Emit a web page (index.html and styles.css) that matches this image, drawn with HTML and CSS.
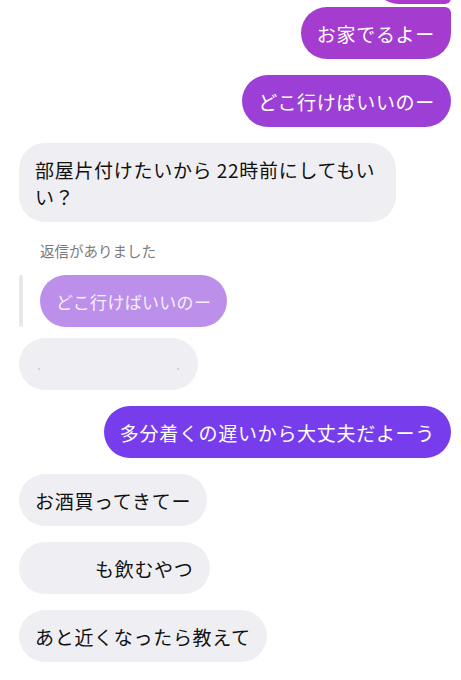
FILE: index.html
```html
<!DOCTYPE html>
<html lang="ja">
<head>
  <meta charset="UTF-8" />
  <meta name="viewport" content="width=device-width, initial-scale=1.0"/>
  <title>chat</title>
  <link rel="stylesheet" href="styles.css">
</head>
<body>

  <div class="chat">
    <!-- previous message, scrolled off -->
    <div class="row me stacked">
      <div class="bubble sent sent-top"></div>
    </div>

    <div class="row me">
      <div class="bubble sent sent-a grouped">お家でるよー</div>
    </div>

    <div class="row me">
      <div class="bubble sent sent-b">どこ行けばいいのー</div>
    </div>

    <div class="row">
      <div class="bubble recv wide">部屋片付けたいから&#8201;22時前にしてもい い？</div>
    </div>

    <!-- reply block -->
    <div class="reply">
      <div class="reply-label">返信がありました</div>
      <div class="reply-body">
        <div class="reply-bar"></div>
        <div class="bubble quoted">どこ行けばいいのー</div>
      </div>
    </div>

    <div class="row tight">
      <div class="bubble recv blank">
        <span class="dot"></span>
        <span class="dot"></span>
      </div>
    </div>

    <div class="row me">
      <div class="bubble sent sent-c">多分着くの遅いから大丈夫だよーう</div>
    </div>

    <div class="row">
      <div class="bubble recv">お酒買ってきてー</div>
    </div>

    <div class="row">
      <div class="bubble recv"><span class="hidden-name"></span>も飲むやつ</div>
    </div>

    <div class="row">
      <div class="bubble recv">あと近くなったら教えて</div>
    </div>
  </div>

</body>
</html>
```

FILE: styles.css
```css
:root {
  --gray: #efeff3;
  --text: #111111;
  --label: #7a7a7e;
}

* {
  margin: 0;
  padding: 0;
  box-sizing: border-box;
}

body {
  background: #ffffff;
  font-family: "Noto Sans CJK JP", "Noto Sans", sans-serif;
  color: var(--text);
  overflow: hidden;
}

.chat {
  display: flex;
  flex-direction: column;
  gap: 16px;
  padding: 0 10px 0 19px;
}

.row {
  display: flex;
}

.row.me {
  justify-content: flex-end;
}

/* consecutive bubbles from the same side sit closer */
.row.stacked {
  margin-bottom: -13px;
}

.bubble {
  font-size: 19px;
  line-height: 27px;
  letter-spacing: 0.7px;
  padding: 13px 16px 12px;
  border-radius: 26px;
  max-width: 377px;
  min-height: 52px;
}

.sent {
  color: #ffffff;
}

.sent-top {
  background: #aa3ace;
  width: 78px;
  margin-top: -48px;
  border-bottom-right-radius: 6px;
}

.sent-a {
  background: #a53cd0;
}

.grouped {
  border-top-right-radius: 6px;
}

.sent-b {
  background: #9b3fd7;
}

.sent-c {
  background: #773ded;
}

.recv {
  background: var(--gray);
}

.wide {
  width: 377px;
}

.reply {
  display: flex;
  flex-direction: column;
  gap: 16px;
  margin-top: 4px;
}

.reply-label {
  font-size: 14.5px;
  line-height: 17px;
  color: var(--label);
  padding-left: 21px;
}

.reply-body {
  display: flex;
  gap: 17px;
}

.reply-bar {
  width: 4px;
  background: #e8e8ec;
  border-radius: 2px;
}

.quoted {
  background: #bb8fea;
  color: #f6effd;
  font-size: 17px;
  letter-spacing: 0.3px;
}

.row.tight {
  margin-top: -5px;
}

.blank {
  width: 179px;
  display: flex;
  justify-content: space-between;
  align-items: flex-end;
  padding: 0 19px 20px;
}

.dot {
  width: 2px;
  height: 2px;
  background: #c9c9cd;
  border-radius: 1px;
}

.hidden-name {
  display: inline-block;
  width: 60px;
}
```
